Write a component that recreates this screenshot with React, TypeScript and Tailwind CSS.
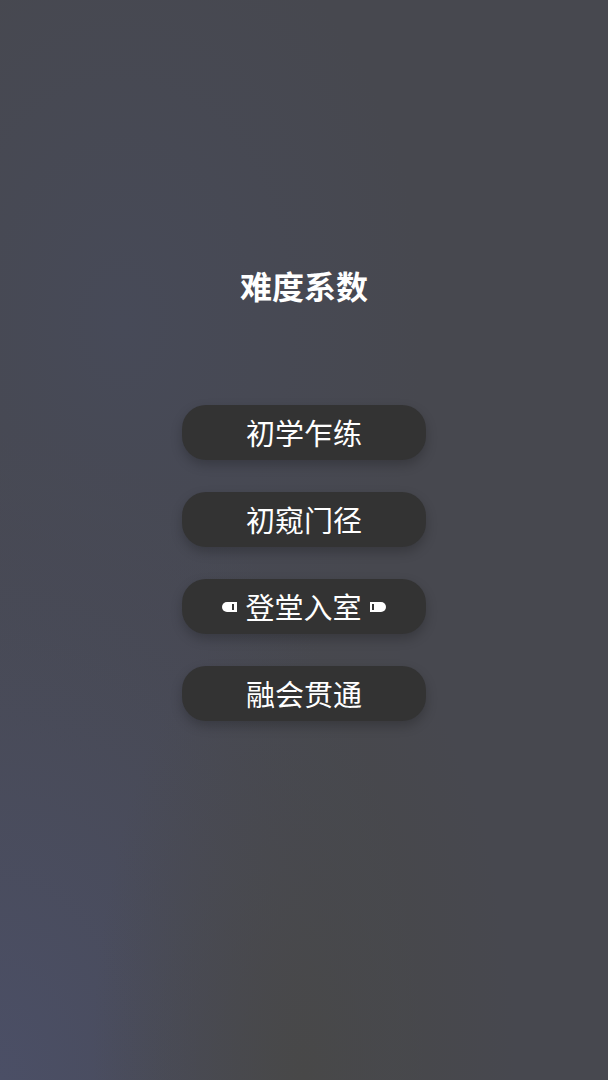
const levels = ["初学乍练", "初窥门径", "登堂入室", "融会贯通"];

function Cap({ side }: { side: "left" | "right" }) {
  return side === "left" ? (
    <span className="flex h-[10px] w-[15px] items-center justify-end rounded-l-full bg-white pr-[3px]">
      <span className="h-[6px] w-[2px] bg-[#333]" />
    </span>
  ) : (
    <span className="flex h-[10px] w-[16px] items-center justify-start rounded-r-full bg-white pl-[2px]">
      <span className="h-[6px] w-[2px] bg-[#333]" />
    </span>
  );
}

export default function App() {
  return (
    <div
      className="relative h-[1080px] w-[608px] overflow-hidden bg-[#47484f]"
      style={{ fontFamily: '"Noto Sans CJK SC", "Noto Sans", sans-serif' }}
    >
      <div className="absolute inset-0 bg-[radial-gradient(ellipse_70%_60%_at_0%_100%,#4b4f66_0%,rgba(76,80,104,0)_100%)]" />
      <div className="absolute inset-0 bg-[radial-gradient(ellipse_35%_45%_at_50%_100%,#484848_0%,rgba(72,72,72,0)_100%)]" />
      <div className="absolute inset-0 bg-[radial-gradient(ellipse_50%_40%_at_20%_30%,#474a58_0%,rgba(71,74,88,0)_100%)]" />

      <div className="relative flex flex-col items-center">
        <h1 className="mt-[264px] text-[32px] font-bold leading-[42px] text-white">难度系数</h1>
        <div className="mt-[99px] flex flex-col gap-[32px]">
          {levels.map((l) => (
            <button
              key={l}
              type="button"
              className="flex h-[55px] w-[244px] items-center justify-center gap-[8px] rounded-[24px] bg-[#333333] text-[29px] leading-none text-white shadow-[0_5px_12px_rgba(0,0,0,0.22)]"
            >
              {l === "登堂入室" ? <Cap side="left" /> : null}
              <span className="pb-[1px]">{l}</span>
              {l === "登堂入室" ? <Cap side="right" /> : null}
            </button>
          ))}
        </div>
      </div>
    </div>
  );
}
